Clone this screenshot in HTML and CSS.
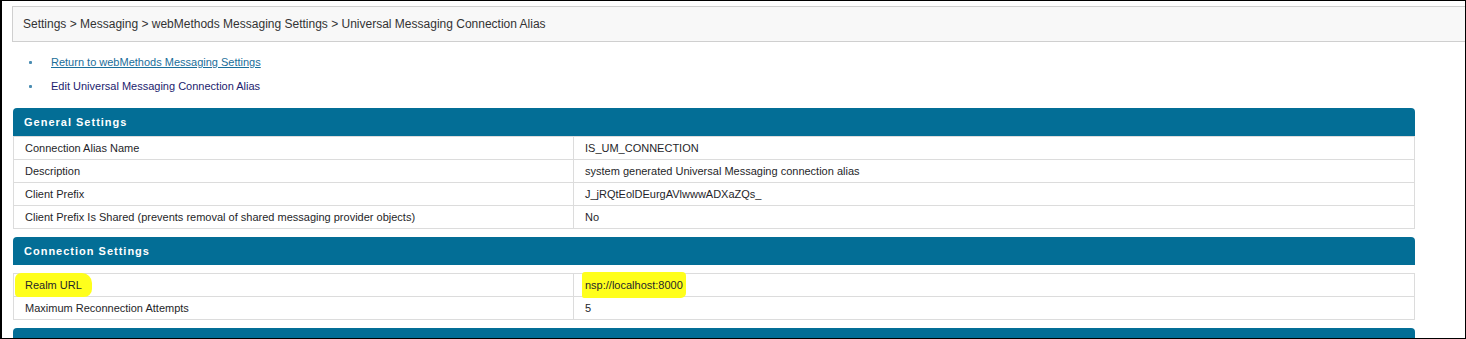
FILE: index.html
```html
<!DOCTYPE html>
<html>

<head>
    <meta charset="utf-8" />
    <title>Universal Messaging Connection Alias</title>
    <link rel="stylesheet" href="styles.css">
</head>

<body>
    <div class="frame">
        <div class="breadcrumb">Settings &gt; Messaging &gt; webMethods Messaging Settings &gt; Universal Messaging Connection Alias</div>

        <ul class="actions">
            <li><a href="#">Return to webMethods Messaging Settings</a></li>
            <li class="current">Edit Universal Messaging Connection Alias</li>
        </ul>

        <div class="section">
            <div class="heading">General Settings</div>
            <table class="props">
                <tr>
                    <td class="label">Connection Alias Name</td>
                    <td>IS_UM_CONNECTION</td>
                </tr>
                <tr>
                    <td class="label">Description</td>
                    <td>system generated Universal Messaging connection alias</td>
                </tr>
                <tr>
                    <td class="label">Client Prefix</td>
                    <td>J_jRQtEolDEurgAVlwwwADXaZQs_</td>
                </tr>
                <tr>
                    <td class="label">Client Prefix Is Shared (prevents removal of shared messaging provider objects)</td>
                    <td>No</td>
                </tr>
            </table>
        </div>

        <div class="section">
            <div class="heading">Connection Settings</div>
            <table class="props spaced">
                <tr>
                    <td class="label"><span class="marker">Realm URL</span></td>
                    <td><span class="marker tight">nsp://localhost:8000</span></td>
                </tr>
                <tr>
                    <td class="label">Maximum Reconnection Attempts</td>
                    <td>5</td>
                </tr>
            </table>
        </div>

        <div class="section">
            <div class="heading">&nbsp;</div>
        </div>
    </div>
</body>

</html>
```

FILE: styles.css
```css
html,
body {
    margin: 0;
    padding: 0;
    background: #fff;
}

body {
    font-family: "Liberation Sans", Arial, sans-serif;
    font-size: 11px;
    color: #222;
}

.frame {
    width: 1466px;
    height: 339px;
    box-sizing: border-box;
    border: 1px solid #000;
    border-left-width: 2px;
    overflow: hidden;
}

.breadcrumb {
    margin: 5px 0 0 10px;
    height: 34px;
    line-height: 34px;
    padding-left: 10px;
    font-size: 12px;
    background: #f8f8f8;
    border: 1px solid #cfcfcf;
    border-right: 0;
    color: #333;
}

.actions {
    list-style: none;
    margin: 8px 0 10px 0;
    padding: 0 0 0 27px;
}

.actions li {
    display: flex;
    align-items: center;
    gap: 19px;
    height: 24px;
}

.actions li::before {
    content: "";
    width: 3px;
    height: 3px;
    border-radius: 1px;
    background: #4a8db2;
}

.actions a {
    color: #1a6e9a;
    text-decoration: underline;
}

.actions .current {
    color: #1c1c6e;
}

.section {
    margin: 0 50px 8px 11px;
}

.heading {
    background: #036e96;
    color: #fff;
    font-weight: bold;
    letter-spacing: 1px;
    height: 28px;
    line-height: 28px;
    padding-left: 11px;
    border-radius: 4px 4px 0 0;
}

.props {
    width: 100%;
    border-collapse: collapse;
}

.props.spaced {
    margin-top: 8px;
}

.props td {
    border: 1px solid #dcdcdc;
    height: 22px;
    padding: 0 11px;
    white-space: nowrap;
    color: #1f1f2a;
}

.props td.label {
    width: 537px;
}

.marker {
    background: #ffff1c;
    padding: 6px 10px 6px 10px;
    margin-left: -10px;
    border-radius: 6px 10px 8px 4px;
}

.marker.tight {
    padding: 7px 3px 7px 3px;
    margin-left: -3px;
    border-radius: 3px 4px 5px 2px;
}
```
